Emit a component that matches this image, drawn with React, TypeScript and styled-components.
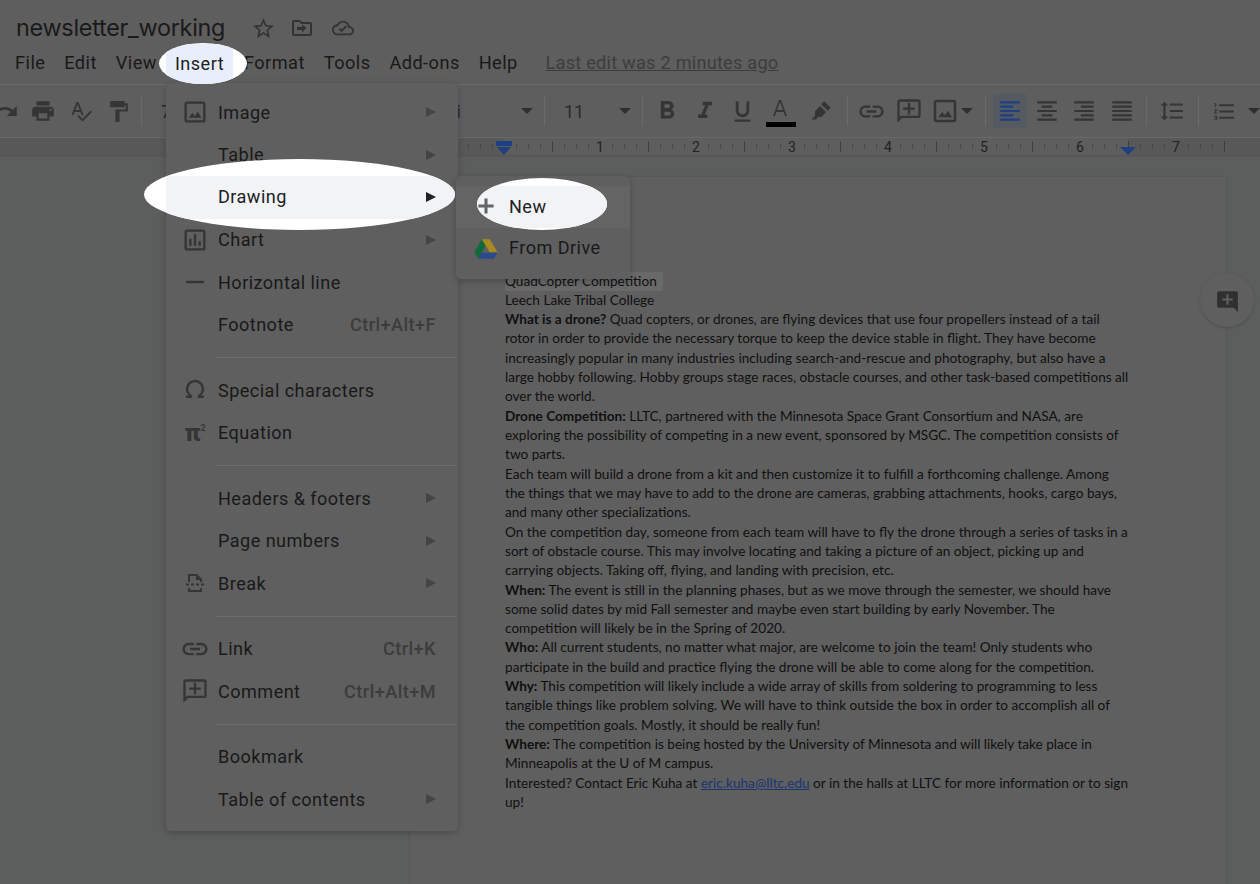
import React from "react";
import styled, { createGlobalStyle } from "styled-components";

const Global = createGlobalStyle`
  html, body { margin: 0; padding: 0; background: #5e5e5e; overflow: hidden; }
  * { box-sizing: border-box; }
`;

const P = {
  print: "M19 8H5c-1.66 0-3 1.34-3 3v6h4v4h12v-4h4v-6c0-1.66-1.34-3-3-3zm-3 11H8v-5h8v5zm3-7c-.55 0-1-.45-1-1s.45-1 1-1 1 .45 1 1-.45 1-1 1zm-1-9H6v4h12V3z",
  redo: "M18.4 10.6C16.55 8.99 14.15 8 11.5 8c-4.65 0-8.58 3.03-9.96 7.22L3.9 16c1.05-3.19 4.05-5.5 7.6-5.5 1.95 0 3.73.72 5.12 1.88L13 16h9V7l-3.6 3.6z",
  spell: "M12.45 16h2.09L9.43 3H7.57L2.46 16h2.09l1.12-3h5.64l1.14 3zm-6.02-5L8.5 5.48 10.57 11H6.43zm15.16.59l-8.09 8.09L9.83 16l-1.41 1.41 5.09 5.09L23 13l-1.41-1.41z",
  paint: "M18 4V3c0-.55-.45-1-1-1H5c-.55 0-1 .45-1 1v4c0 .55.45 1 1 1h12c.55 0 1-.45 1-1V6h1v4H9v11c0 .55.45 1 1 1h2c.55 0 1-.45 1-1v-9h8V4h-3z",
  bold: "M15.6 10.79c.97-.67 1.65-1.77 1.65-2.79 0-2.26-1.75-4-4-4H7v14h7.04c2.09 0 3.71-1.7 3.71-3.79 0-1.52-.86-2.82-2.15-3.42zM10 6.5h3c.83 0 1.5.67 1.5 1.5s-.67 1.5-1.5 1.5h-3v-3zm3.5 9H10v-3h3.5c.83 0 1.5.67 1.5 1.5s-.67 1.5-1.5 1.5z",
  italic: "M10 4v3h2.21l-3.42 8H6v3h8v-3h-2.21l3.42-8H18V4z",
  underline: "M12 17c3.31 0 6-2.69 6-6V3h-2.5v8c0 1.93-1.57 3.5-3.5 3.5S8.5 12.93 8.5 11V3H6v8c0 3.31 2.69 6 6 6zm-7 2v2h14v-2H5z",
  colorA: "M11 1L5 17h2l1.3-4h7.4l1.3 4h2L13 1h-2zM9 11l3-8 3 8H9z",
  marker: "M15.2 2.2l6.6 6.6-3 3-6.6-6.6zM11 7l6 6-4.5 5H9l-2 2.5H2.5L6 16.5V12.2z",
  link: "M3.9 12c0-1.71 1.39-3.1 3.1-3.1h4V7H7c-2.76 0-5 2.24-5 5s2.24 5 5 5h4v-1.9H7c-1.71 0-3.1-1.39-3.1-3.1zM8 13h8v-2H8v2zm9-6h-4v1.9h4c1.71 0 3.1 1.39 3.1 3.1s-1.39 3.1-3.1 3.1h-4V17h4c2.76 0 5-2.24 5-5s-2.24-5-5-5z",
  comment: "M20 2H4c-1.1 0-2 .9-2 2v18l4-4h14c1.1 0 2-.9 2-2V4c0-1.1-.9-2-2-2zm0 14H5.2L4 17.2V4h16v12zM11 5h2v4h4v2h-4v4h-2v-4H7V9h4z",
  image: "M19 5v14H5V5h14m0-2H5c-1.1 0-2 .9-2 2v14c0 1.1.9 2 2 2h14c1.1 0 2-.9 2-2V5c0-1.1-.9-2-2-2zM6.5 17l3.2-4.2 2.1 2.6 2.7-3.6 3 5.2z",
  alignL: "M3 3h18v2H3zM3 7h12v2H3zM3 11h18v2H3zM3 15h12v2H3zM3 19h18v2H3z",
  alignC: "M3 3h18v2H3zM7 7h10v2H7zM3 11h18v2H3zM7 15h10v2H7zM3 19h18v2H3z",
  alignR: "M3 3h18v2H3zM9 7h12v2H9zM3 11h18v2H3zM9 15h12v2H9zM3 19h18v2H3z",
  justify: "M3 3h18v2H3zM3 7h18v2H3zM3 11h18v2H3zM3 15h18v2H3zM3 19h18v2H3z",
  spacing: "M6 7h2.5L5 3.5 1.5 7H4v10H1.5L5 20.5 8.5 17H6V7zm4-2v2h12V5H10zm0 14h12v-2H10v2zm0-6h12v-2H10v2z",
  list: "M2 17h2v.5H3v1h1v.5H2v1h3v-4H2v1zm1-9h1V4H2v1h1v3zm-1 3h1.8L2 13.1v.9h3v-1H3.2L5 10.9V10H2v1zm5-6v2h14V5H7zm0 14h14v-2H7v2zm0-6h14v-2H7v2z",
  star: "M22 9.24l-7.19-.62L12 2 9.19 8.63 2 9.24l5.46 4.73L5.82 21 12 17.27 18.18 21l-1.63-7.03L22 9.24zM12 15.4l-3.76 2.27 1-4.28-3.32-2.88 4.38-.38L12 6.1l1.71 4.04 4.38.38-3.32 2.88 1 4.28L12 15.4z",
  move: "M20 6h-8l-2-2H4c-1.1 0-2 .9-2 2v12c0 1.1.9 2 2 2h16c1.1 0 2-.9 2-2V8c0-1.1-.9-2-2-2zm0 12H4V6h5.17l2 2H20v10zm-8-1.5l4.5-4.5L12 8.5V11H7v3h5z",
  cloud: "M19.35 10.04C18.67 6.59 15.64 4 12 4 9.11 4 6.6 5.64 5.35 8.04 2.34 8.36 0 10.91 0 14c0 3.31 2.69 6 6 6h13c2.76 0 5-2.24 5-5 0-2.64-2.05-4.78-4.65-4.96zM19 18H6c-2.21 0-4-1.79-4-4 0-2.05 1.53-3.76 3.56-3.97l1.07-.11.5-.95C8.08 7.14 9.94 6 12 6c2.62 0 4.88 1.86 5.39 4.43l.3 1.5 1.53.11c1.56.1 2.78 1.41 2.78 2.96 0 1.65-1.35 3-3 3zM10.5 16.5L7.5 13.5l1.4-1.4 1.6 1.6 4.6-4.6 1.4 1.4z",
  chart: "M19 3H5c-1.1 0-2 .9-2 2v14c0 1.1.9 2 2 2h14c1.1 0 2-.9 2-2V5c0-1.1-.9-2-2-2zm0 16H5V5h14v14zM7 11h2v6H7zM11 7h2v10h-2zM15 13h2v4h-2z",
  hline: "M3 10.8h18v2.4H3z",
  omega: "M3 20h6.2v-2.6C6.8 16.2 5.2 13.8 5.2 11a6.8 6.8 0 0 1 13.6 0c0 2.8-1.6 5.2-4 6.4V20H21v-2.4h-3.2c2-1.6 3.4-4 3.4-6.6a9.2 9.2 0 0 0-18.4 0c0 2.6 1.4 5 3.4 6.6H3z",
  breakPage: "M5 3h9l5 5v3h-2V9h-4V5H7v6H5zM3 12.5h3v2H3zM8 12.5h3v2H8zM13 12.5h3v2h-3zM18 12.5h3v2h-3zM5 17h2v2h10v-2h2v4H5z",
  add: "M19 13h-6v6h-2v-6H5v-2h6V5h2v6h6z",
  addThick: "M19 13.4h-5.6V19h-2.8v-5.6H5v-2.8h5.6V5h2.8v5.6H19z",
  fab: "M20 3H4c-1.1 0-2 .9-2 2v12c0 1.1.9 2 2 2h14l4 4V5c0-1.1-.9-2-2-2zm-3 9h-4v4h-2v-4H7v-2h4V6h2v4h4z",
};

const Svg = styled.svg<{ $size: number; $color?: string }>`
  display: block;
  flex: none;
  width: ${p => p.$size}px;
  height: ${p => p.$size}px;
  fill: ${p => p.$color || "#353535"};
`;

const Icon = ({ d, size = 29, color }: { d: string; size?: number; color?: string }) => (
  <Svg $size={size} $color={color} viewBox="0 0 24 24"><path fillRule="evenodd" d={d} /></Svg>
);

const Stage = styled.div`
  position: relative;
  width: 1260px;
  height: 884px;
  overflow: hidden;
  background: #5e5e5e;
  font-family: Roboto, "Liberation Sans", sans-serif;
  color: #191919;
`;

const Header = styled.header`
  height: 85px;
  border-bottom: 1px solid #6b6b6b;
  padding: 12px 0 0 16px;
`;
const TitleRow = styled.div`
  display: flex;
  align-items: center;
  height: 32px;
`;
const Title = styled.h1`
  margin: 0 25.5px 0 0;
  font: 400 23.4px/32px "Inter", Roboto, sans-serif;
  letter-spacing: -0.27px;
  color: #1a1a1a;
`;
const TitleIcons = styled.div`
  display: flex;
  align-items: center;
  gap: 14px;
`;
const CloudSlot = styled.div`
  margin-left: 4.5px;
`;
const MenuBar = styled.nav`
  display: flex;
  align-items: center;
  gap: 18.9px;
  height: 34px;
  margin: 1px 0 0 -1px;
  font-size: 18.2px;
  letter-spacing: 0.45px;
`;
const MenuName = styled.span``;
const LastEdit = styled.span`
  margin-left: 9px;
  color: #3d3d3d;
  letter-spacing: 0.22px;
  text-decoration: underline;
`;

const Toolbar = styled.div`
  display: flex;
  align-items: center;
  height: 52px;
  margin-left: -14px;
  font-size: 18px;
  color: #2a2a2a;
`;
const ToolBtn = styled.div<{ $w: number; $active?: boolean }>`
  position: relative;
  flex: none;
  display: flex;
  align-items: center;
  justify-content: center;
  width: ${p => p.$w}px;
  height: 34px;
  border-radius: 3px;
  background: ${p => (p.$active ? "#555a62" : "transparent")};
`;
const Sep = styled.div<{ $l: number; $r: number }>`
  flex: none;
  width: 1px;
  height: 30px;
  margin: 0 ${p => p.$r}px 0 ${p => p.$l}px;
  background: #6b6b6b;
`;
const Select = styled.div<{ $w: number; $pl: number }>`
  flex: none;
  display: flex;
  align-items: center;
  justify-content: space-between;
  width: ${p => p.$w}px;
  padding: 0 7px 0 ${p => p.$pl}px;
`;
const Caret = styled.span`
  flex: none;
  width: 0;
  height: 0;
  border-left: 6px solid transparent;
  border-right: 6px solid transparent;
  border-top: 6px solid #2f2f2f;
`;
const CaretSlot = styled.div<{ $w: number }>`
  flex: none;
  display: flex;
  justify-content: center;
  width: ${p => p.$w}px;
  overflow: visible;
`;
const ColorBar = styled.span`
  position: absolute;
  left: 5px;
  bottom: 1px;
  width: 30px;
  height: 5px;
  background: #000;
`;
const ColorGlyph = styled.div`
  margin-bottom: 0;
`;

const RulerSvg = styled.svg`
  display: block;
  width: 1260px;
  height: 20px;
`;

const Canvas = styled.main`
  height: 727px;
  padding: 20px 0 0 410px;
  background: #5c5d5d;
`;
const Page = styled.article`
  width: 816px;
  height: 800px;
  padding: 94.5px 0 0 95px;
  background: #5f5f5f;
  box-shadow: 0 0 2px rgba(0, 0, 0, 0.18);
  font: 400 13.62px/19.31px Lato, "Open Sans", sans-serif;
  color: #101010;
`;
const Line = styled.div<{ $mark?: boolean }>`
  width: ${p => (p.$mark ? "158px" : "auto")};
  white-space: nowrap;
  background: ${p => (p.$mark ? "#696969" : "transparent")};
`;
const DocLink = styled.a`
  color: #1b3570;
  text-decoration: underline;
`;

const Fab = styled.div`
  position: absolute;
  left: 1200px;
  top: 273px;
  display: flex;
  align-items: center;
  justify-content: center;
  width: 54px;
  height: 54px;
  border-radius: 50%;
  background: #5f5f5f;
  box-shadow: 0 1px 3px rgba(0, 0, 0, 0.18);
`;

const Popup = styled.div<{ $x: number; $y: number; $w: number; $pt: number; $pb: number }>`
  position: absolute;
  left: ${p => p.$x}px;
  top: ${p => p.$y}px;
  width: ${p => p.$w}px;
  padding: ${p => p.$pt}px 0 ${p => p.$pb}px;
  background: #5f5f5f;
  border-radius: 5px;
  box-shadow: 0 2px 7px rgba(0, 0, 0, 0.22);
  font-size: 18.1px;
  letter-spacing: 0.45px;
`;
const Row = styled.div`
  display: flex;
  align-items: center;
  height: 42.5px;
  padding-right: 22px;
`;
const IconSlot = styled.div`
  flex: none;
  display: flex;
  align-items: center;
  justify-content: center;
  width: 30px;
  margin: 0 8px 0 14px;
`;
const RowLabel = styled.span`
  flex: 1;
  white-space: nowrap;
`;
const Shortcut = styled.span`
  color: #3c3c3c;
  font-weight: 500;
`;
const Arrow = styled.span<{ $dark?: boolean }>`
  flex: none;
  display: block;
  width: 0;
  height: 0;
  border-top: 5px solid transparent;
  border-bottom: 5px solid transparent;
  border-left: 10px solid ${p => (p.$dark ? "#202124" : "#444")};
`;
const Divider = styled.hr`
  height: 1px;
  margin: 11.5px 2px 10.55px 49px;
  border: 0;
  background: #6c6c6c;
`;
const PiIcon = styled.span`
  font: 900 24px/1 Roboto, sans-serif;
  color: #353535;
  white-space: nowrap;
  letter-spacing: 0;
`;
const PiSup = styled.sup`
  font-size: 9px;
  font-weight: 700;
  vertical-align: 10px;
  line-height: 0;
`;
const SubRow = styled.div<{ $hover?: boolean }>`
  display: flex;
  align-items: center;
  height: 42px;
  padding-left: 18px;
  background: ${p => (p.$hover ? "#646464" : "transparent")};
`;
const SubIcon = styled.div`
  flex: none;
  display: flex;
  justify-content: center;
  width: 24px;
  margin-right: 11px;
`;
const SubLabel = styled.span`
  padding-bottom: 3px;
`;

const Spot = styled.div<{ $x: number; $y: number; $w: number; $h: number }>`
  position: absolute;
  left: ${p => p.$x}px;
  top: ${p => p.$y}px;
  width: ${p => p.$w}px;
  height: ${p => p.$h}px;
  border-radius: 50%;
  background: #fff;
  overflow: hidden;
  color: #202124;
  font-size: 18.1px;
  letter-spacing: 0.45px;
`;
const Band = styled.div<{ $l: number; $t: number; $w: number; $h: number; $bg: string }>`
  position: absolute;
  left: ${p => p.$l}px;
  top: ${p => p.$t}px;
  width: ${p => p.$w}px;
  height: ${p => p.$h}px;
  display: flex;
  align-items: center;
  padding-bottom: 2px;
  background: ${p => p.$bg};
`;
const BandText = styled.span<{ $pl: number }>`
  flex: 1;
  padding-left: ${p => p.$pl}px;
`;
const BandArrow = styled.span`
  display: block;
  margin-right: 19px;
`;
const BandIcon = styled.div`
  flex: none;
  display: flex;
  justify-content: center;
  width: 18px;
  margin-right: 14px;
`;

const Ruler = () => {
  const ticks: React.ReactNode[] = [];
  for (let x = 420; x <= 1224; x += 12) {
    const k = x - 504;
    const isEnd = x === 1224;
    const tall = (k % 48 === 0 && k % 96 !== 0) || isEnd;
    if (k % 96 === 0 && k > 0 && !isEnd) continue;
    if (k === 0) continue;
    ticks.push(
      <rect key={x} x={x} y={tall ? 4 : 7} width="1" height={tall ? 11 : 5} fill={tall ? "#3e3e3e" : "#494949"} />
    );
  }
  return (
    <RulerSvg viewBox="0 0 1260 20">
      <rect width="1260" height="20" fill="#5e5e5e" />
      <rect width="504" height="19" fill="#585858" />
      <rect x="1128" width="132" height="19" fill="#585858" />
      <rect width="1260" height="1" fill="#686868" />
      <rect y="18" width="1260" height="1.5" fill="#555" />
      {ticks}
      {[1, 2, 3, 4, 5, 6, 7].map(n => (
        <text key={n} x={504 + n * 96} y="15" fontSize="14" fontFamily="Roboto" textAnchor="middle" fill="#222">{n}</text>
      ))}
      <rect x="496" y="4" width="16" height="5" fill="#1e3f82" />
      <path d="M497 10h14l-7 8zM1120 10h16l-8 8z" fill="#1e3f82" />
    </RulerSvg>
  );
};

const DriveSvg = styled.svg`
  display: block;
  width: 26px;
  height: 22px;
`;
const Drive = () => (
  <DriveSvg viewBox="0 0 26 22">
    <path d="M8.5 0.5L0.5 14.5 4.5 21.5 12.5 7.5z" fill="#0f6b38" />
    <path d="M8.5 0.5h8.5l8.5 14h-8.5z" fill="#a88a1f" />
    <path d="M7.5 15h18l-4 6.5H4.5z" fill="#2b4a8c" />
  </DriveSvg>
);

type Item = { label: string; icon?: React.ReactNode; arrow?: boolean; key_?: string };

const groups: Item[][] = [
  [
    { label: "Image", icon: <Icon d={P.image} size={28} />, arrow: true },
    { label: "Table", arrow: true },
    { label: "Drawing", arrow: true },
    { label: "Chart", icon: <Icon d={P.chart} size={28} />, arrow: true },
    { label: "Horizontal line", icon: <Icon d={P.hline} size={24} /> },
    { label: "Footnote", key_: "Ctrl+Alt+F" },
  ],
  [
    { label: "Special characters", icon: <Icon d={P.omega} size={24} /> },
    { label: "Equation", icon: <PiIcon>π<PiSup>2</PiSup></PiIcon> },
  ],
  [
    { label: "Headers & footers", arrow: true },
    { label: "Page numbers", arrow: true },
    { label: "Break", icon: <Icon d={P.breakPage} size={24} />, arrow: true },
  ],
  [
    { label: "Link", icon: <Icon d={P.link} size={30} />, key_: "Ctrl+K" },
    { label: "Comment", icon: <Icon d={P.comment} size={28} />, key_: "Ctrl+Alt+M" },
  ],
  [
    { label: "Bookmark" },
    { label: "Table of contents", arrow: true },
  ],
];

const doc: React.ReactNode[] = [
  "Leech Lake Tribal College",
  <><b>What is a drone?</b> Quad copters, or drones, are flying devices that use four propellers instead of a tail</>,
  "rotor in order to provide the necessary torque to keep the device stable in flight. They have become",
  "increasingly popular in many industries including search-and-rescue and photography, but also have a",
  "large hobby following. Hobby groups stage races, obstacle courses, and other task-based competitions all",
  "over the world.",
  <><b>Drone Competition:</b> LLTC, partnered with the Minnesota Space Grant Consortium and NASA, are</>,
  "exploring the possibility of competing in a new event, sponsored by MSGC. The competition consists of",
  "two parts.",
  "Each team will build a drone from a kit and then customize it to fulfill a forthcoming challenge. Among",
  "the things that we may have to add to the drone are cameras, grabbing attachments, hooks, cargo bays,",
  "and many other specializations.",
  "On the competition day, someone from each team will have to fly the drone through a series of tasks in a",
  "sort of obstacle course. This may involve locating and taking a picture of an object, picking up and",
  "carrying objects. Taking off, flying, and landing with precision, etc.",
  <><b>When:</b> The event is still in the planning phases, but as we move through the semester, we should have</>,
  "some solid dates by mid Fall semester and maybe even start building by early November. The",
  "competition will likely be in the Spring of 2020.",
  <><b>Who:</b> All current students, no matter what major, are welcome to join the team! Only students who</>,
  "participate in the build and practice flying the drone will be able to come along for the competition.",
  <><b>Why:</b> This competition will likely include a wide array of skills from soldering to programming to less</>,
  "tangible things like problem solving. We will have to think outside the box in order to accomplish all of",
  "the competition goals. Mostly, it should be really fun!",
  <><b>Where:</b> The competition is being hosted by the University of Minnesota and will likely take place in</>,
  "Minneapolis at the U of M campus.",
  <>Interested? Contact Eric Kuha at <DocLink>eric.kuha@lltc.edu</DocLink> or in the halls at LLTC for more information or to sign</>,
  "up!",
];

export default function App() {
  return (
    <Stage>
      <Global />
      <Header>
        <TitleRow>
          <Title>newsletter_working</Title>
          <TitleIcons>
            <Icon d={P.star} size={25} color="#333" />
            <Icon d={P.move} size={24} color="#333" />
            <CloudSlot><Icon d={P.cloud} size={22} color="#333" /></CloudSlot>
          </TitleIcons>
        </TitleRow>
        <MenuBar>
          {["File", "Edit", "View", "Insert", "Format", "Tools", "Add-ons", "Help"].map(m => (
            <MenuName key={m}>{m}</MenuName>
          ))}
          <LastEdit>Last edit was 2 minutes ago</LastEdit>
        </MenuBar>
      </Header>

      <Toolbar>
        <ToolBtn $w={38}><Icon d={P.redo} size={27} /></ToolBtn>
        <ToolBtn $w={38}><Icon d={P.print} size={26} /></ToolBtn>
        <ToolBtn $w={37}><Icon d={P.spell} size={24} /></ToolBtn>
        <ToolBtn $w={38}><Icon d={P.paint} size={25} /></ToolBtn>
        <Sep $l={4} $r={4} />
        <Select $w={120} $pl={15}>75%</Select>
        <Select $w={134} $pl={8}>Normal text</Select>
        <Select $w={140} $pl={10}>Calibri<Caret /></Select>
        <Sep $l={4} $r={3} />
        <Select $w={90} $pl={16}>11<Caret /></Select>
        <Sep $l={4} $r={5} />
        <ToolBtn $w={38}><Icon d={P.bold} size={30} /></ToolBtn>
        <ToolBtn $w={37}><Icon d={P.italic} size={28} /></ToolBtn>
        <ToolBtn $w={38}><Icon d={P.underline} size={27} /></ToolBtn>
        <ToolBtn $w={38}><ColorGlyph><Icon d={P.colorA} size={24} /></ColorGlyph><ColorBar /></ToolBtn>
        <ToolBtn $w={44}><Icon d={P.marker} size={24} /></ToolBtn>
        <Sep $l={4} $r={4} />
        <ToolBtn $w={38}><Icon d={P.link} size={29} /></ToolBtn>
        <ToolBtn $w={37}><Icon d={P.comment} size={28} /></ToolBtn>
        <ToolBtn $w={36}><Icon d={P.image} size={30} /></ToolBtn>
        <CaretSlot $w={8}><Caret /></CaretSlot>
        <Sep $l={14} $r={7} />
        <ToolBtn $w={34} $active><Icon d={P.alignL} size={26} color="#1e3f82" /></ToolBtn>
        <ToolBtn $w={40}><Icon d={P.alignC} size={26} /></ToolBtn>
        <ToolBtn $w={34}><Icon d={P.alignR} size={26} /></ToolBtn>
        <ToolBtn $w={42}><Icon d={P.justify} size={26} /></ToolBtn>
        <Sep $l={3} $r={0} />
        <ToolBtn $w={50}><Icon d={P.spacing} size={26} /></ToolBtn>
        <Sep $l={1} $r={0} />
        <ToolBtn $w={50}><Icon d={P.list} size={25} /></ToolBtn>
        <CaretSlot $w={10}><Caret /></CaretSlot>
      </Toolbar>

      <Ruler />

      <Canvas>
        <Page>
          <Line $mark>QuadCopter Competition</Line>
          {doc.map((l, i) => <Line key={i}>{l}</Line>)}
        </Page>
      </Canvas>

      <Fab><Icon d={P.fab} size={25} color="#303030" /></Fab>

      <Popup $x={166} $y={83} $w={292} $pt={7.8} $pb={10.5}>
        {groups.map((g, gi) => (
          <React.Fragment key={gi}>
            {gi > 0 && <Divider />}
            {g.map(it => (
              <Row key={it.label}>
                <IconSlot>{it.icon}</IconSlot>
                <RowLabel>{it.label}</RowLabel>
                {it.key_ && <Shortcut>{it.key_}</Shortcut>}
                {it.arrow && <Arrow />}
              </Row>
            ))}
          </React.Fragment>
        ))}
      </Popup>

      <Popup $x={456} $y={176} $w={174} $pt={10} $pb={9}>
        <SubRow $hover><SubIcon><Icon d={P.add} size={26} /></SubIcon><SubLabel>New</SubLabel></SubRow>
        <SubRow><SubIcon><Drive /></SubIcon><SubLabel>From Drive</SubLabel></SubRow>
      </Popup>

      <Spot $x={159} $y={43} $w={88} $h={41}>
        <Band $l={7} $t={1} $w={67} $h={40} $bg="#e8effb">
          <BandText $pl={9}>Insert</BandText>
        </Band>
      </Spot>
      <Spot $x={144} $y={159} $w={311} $h={71}>
        <Band $l={22} $t={17} $w={289} $h={43} $bg="#f1f3f4">
          <BandText $pl={52}>Drawing</BandText>
          <BandArrow><Arrow $dark /></BandArrow>
        </Band>
      </Spot>
      <Spot $x={477} $y={178} $w={130} $h={52}>
        <Band $l={0} $t={8} $w={130} $h={42} $bg="#f1f3f4">
          <BandIcon><Icon d={P.addThick} size={26} color="#5f6368" /></BandIcon>
          <BandText $pl={0}>New</BandText>
        </Band>
      </Spot>
    </Stage>
  );
}
